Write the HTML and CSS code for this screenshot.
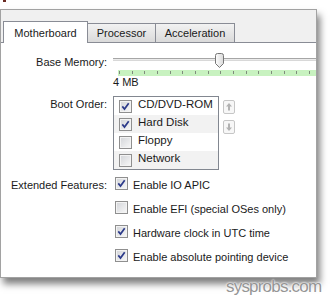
FILE: index.html
```html
<!DOCTYPE html>
<html lang="en">
<head>
    <meta charset="UTF-8">
    <title>System settings</title>
    <link rel="stylesheet" href="styles.css">
</head>
<body>
    <div class="page">
        <div class="top-strip"><span class="cut-glyph"></span></div>

        <div class="frame">
            <div class="tabbar">
                <div class="tab active">Motherboard</div>
                <div class="tab tab-processor">Processor</div>
                <div class="tab tab-accel">Acceleration</div>
            </div>

            <div class="panel">
                <div class="form">
                    <div class="label label-mem">Base Memory:</div>
                    <div class="slider">
                        <div class="track"></div>
                        <svg class="thumb" width="9" height="15" viewBox="0 0 9 15">
                            <defs>
                                <linearGradient id="thumb-fill" x1="0" y1="0" x2="1" y2="0">
                                    <stop offset="0" stop-color="#fdfdfd"/>
                                    <stop offset="1" stop-color="#d9d9d9"/>
                                </linearGradient>
                            </defs>
                            <path d="M0.5 2.5 Q0.5 0.5 2.5 0.5 H6.5 Q8.5 0.5 8.5 2.5 V10.5 L4.5 14.5 L0.5 10.5 Z" fill="url(#thumb-fill)" stroke="#767676"/>
                        </svg>
                    </div>

                    <div class="scale col2">
                        <svg width="198" height="6" viewBox="0 0 198 6">
                            <g fill="#7f8b7d">
                                <rect x="1" y="1" width="1" height="3"/>
                                <rect x="14" y="1" width="1" height="3"/>
                                <rect x="26" y="1" width="1" height="3"/>
                                <rect x="39" y="1" width="1" height="3"/>
                                <rect x="52" y="1" width="1" height="3"/>
                                <rect x="64" y="1" width="1" height="3"/>
                                <rect x="77" y="1" width="1" height="3"/>
                                <rect x="90" y="1" width="1" height="3"/>
                                <rect x="102" y="1" width="1" height="3"/>
                                <rect x="115" y="1" width="1" height="3"/>
                                <rect x="128" y="1" width="1" height="3"/>
                                <rect x="140" y="1" width="1" height="3"/>
                                <rect x="153" y="1" width="1" height="3"/>
                                <rect x="166" y="1" width="1" height="3"/>
                                <rect x="178" y="1" width="1" height="3"/>
                                <rect x="191" y="1" width="1" height="3"/>
                            </g>
                        </svg>
                    </div>
                    <div class="scale-min col2">4 MB</div>

                    <div class="label label-boot">Boot Order:</div>
                    <div class="boot">
                        <ul class="boot-list">
                            <li>
                                <span class="check"><svg viewBox="0 0 11 11"><path d="M2.3 5.4 L4.5 8 L8.7 2.2"/></svg></span>
                                <span class="boot-name">CD/DVD-ROM</span>
                            </li>
                            <li>
                                <span class="check"><svg viewBox="0 0 11 11"><path d="M2.3 5.4 L4.5 8 L8.7 2.2"/></svg></span>
                                <span class="boot-name">Hard Disk</span>
                            </li>
                            <li>
                                <span class="check"></span>
                                <span class="boot-name">Floppy</span>
                            </li>
                            <li>
                                <span class="check"></span>
                                <span class="boot-name">Network</span>
                            </li>
                        </ul>
                        <div class="order-buttons">
                            <svg class="order-btn" width="12" height="14" viewBox="0 0 12 14">
                                <rect x="0.5" y="0.5" width="11" height="13" rx="1.5" fill="#f7f7f7" stroke="#c6c6c6"/>
                                <path d="M6 3 L9 6.5 H7 V10.5 H5 V6.5 H3 Z" fill="#b2b2b2"/>
                            </svg>
                            <svg class="order-btn" width="12" height="14" viewBox="0 0 12 14">
                                <rect x="0.5" y="0.5" width="11" height="13" rx="1.5" fill="#f7f7f7" stroke="#c6c6c6"/>
                                <path d="M6 11 L9 7.5 H7 V3.5 H5 V7.5 H3 Z" fill="#b2b2b2"/>
                            </svg>
                        </div>
                    </div>

                    <div class="label label-ext">Extended Features:</div>
                    <div class="features">
                        <div class="feature">
                            <span class="check"><svg viewBox="0 0 11 11"><path d="M2.3 5.4 L4.5 8 L8.7 2.2"/></svg></span>
                            <span class="feature-text">Enable IO APIC</span>
                        </div>
                        <div class="feature">
                            <span class="check"></span>
                            <span class="feature-text">Enable EFI (special OSes only)</span>
                        </div>
                        <div class="feature">
                            <span class="check"><svg viewBox="0 0 11 11"><path d="M2.3 5.4 L4.5 8 L8.7 2.2"/></svg></span>
                            <span class="feature-text">Hardware clock in UTC time</span>
                        </div>
                        <div class="feature">
                            <span class="check"><svg viewBox="0 0 11 11"><path d="M2.3 5.4 L4.5 8 L8.7 2.2"/></svg></span>
                            <span class="feature-text">Enable absolute pointing device</span>
                        </div>
                    </div>
                </div>
            </div>
        </div>

        <div class="watermark">sysprobs.com</div>
    </div>
</body>
</html>
```

FILE: styles.css
```css
body {
    margin: 0;
    background-color: #fff;
    font-family: "Liberation Sans", Arial, sans-serif;
    font-size: 11px;
    color: #1a1a1a;
}
.page {
    position: relative;
    width: 332px;
    height: 297px;
    overflow: hidden;
}
.top-strip {
    height: 9px;
}
.cut-glyph {
    display: block;
    width: 3px;
    height: 2px;
    margin-left: 3px;
    background-color: #6a2a22;
}

/* dialog frame */
.frame {
    box-sizing: border-box;
    width: 317px;
    height: 269px;
    border: 1px solid #a2a2a2;
    background-color: #f0f0f0;
    box-shadow: 3px 6px 7px rgba(0,0,0,0.5);
}
.tabbar {
    display: flex;
    align-items: flex-end;
    height: 32px;
    padding-left: 2px;
}
.tab {
    box-sizing: border-box;
    height: 19px;
    border: 1px solid #898c95;
    border-bottom: none;
    background: linear-gradient(#f2f2f2, #e6e6e6 50%, #dadada);
    text-align: center;
    line-height: 18px;
}
.tab.active {
    position: relative;
    z-index: 1;
    width: 85px;
    height: 22px;
    margin-bottom: -1px;
    padding-top: 1px;
    line-height: 20px;
    background: #fff;
}
.tab-processor {
    width: 69px;
    margin-left: -1px;
}
.tab-accel {
    width: 80px;
    margin-left: -1px;
}
.panel {
    box-sizing: border-box;
    height: 235px;
    padding-top: 10px;
    border-top: 1px solid #898c95;
    background-color: #fff;
}

/* form layout */
.form {
    display: grid;
    grid-template-columns: 106px 1fr;
    column-gap: 6px;
    align-items: start;
}
.col2 {
    grid-column: 2;
}
.label {
    grid-column: 1;
    text-align: right;
    line-height: 13px;
    white-space: nowrap;
}
.label-mem {
    margin-top: 3px;
}
.label-boot {
    margin-top: 10px;
}
.label-ext {
    margin-top: 9px;
}

/* memory slider */
.slider {
    position: relative;
    height: 16px;
}
.track {
    height: 1px;
    margin-top: 5px;
    border-top: 1px solid #a6a6a6;
    border-bottom: 1px solid #d8d8d8;
    background-color: #ececec;
}
.thumb {
    position: absolute;
    left: 102px;
    top: 0;
}
.scale {
    height: 6px;
    margin-top: 1px;
    margin-left: 5px;
    background-color: #c8f2c0;
}
.scale svg {
    display: block;
}
.scale-min {
    line-height: 12px;
}

/* boot order */
.boot {
    display: flex;
    margin-top: 8px;
}
.boot-list {
    width: 104px;
    margin: 0;
    padding: 0;
    list-style: none;
    border: 1px solid #828790;
}
.boot-list li {
    display: flex;
    height: 18px;
    padding-left: 5px;
}
.boot-list li:nth-child(even) {
    background-color: #f2f2f2;
}
.boot-list .check {
    margin-top: 3px;
}
.boot-name {
    margin-left: 6px;
    font-size: 11.5px;
    line-height: 14px;
}
.order-buttons {
    display: flex;
    flex-direction: column;
    gap: 6px;
    margin: 4px 0 0 4px;
}
.order-btn {
    display: block;
}

/* checkboxes */
.check {
    flex: none;
    box-sizing: border-box;
    width: 13px;
    height: 13px;
    border: 1px solid #8f8f8f;
    background: linear-gradient(135deg, #d2d4d8, #f8f8f8);
    box-shadow: inset 0 0 0 1px #f3f3f3;
}
.check svg {
    display: block;
    width: 11px;
    height: 11px;
}
.check path {
    fill: none;
    stroke: #2c3a8a;
    stroke-width: 1.7;
}

/* extended features */
.features {
    margin-top: 2px;
}
.feature {
    display: flex;
    height: 24px;
}
.feature .check {
    margin: 5px 0 0 2px;
}
.feature-text {
    margin: 7px 0 0 5px;
    line-height: 13px;
}

.watermark {
    position: absolute;
    left: 226px;
    top: 278px;
    font-size: 17px;
    line-height: 17px;
    letter-spacing: -0.8px;
    color: #959595;
    text-shadow: 0 0 2px #fff, 0 0 2px #fff;
}
```
